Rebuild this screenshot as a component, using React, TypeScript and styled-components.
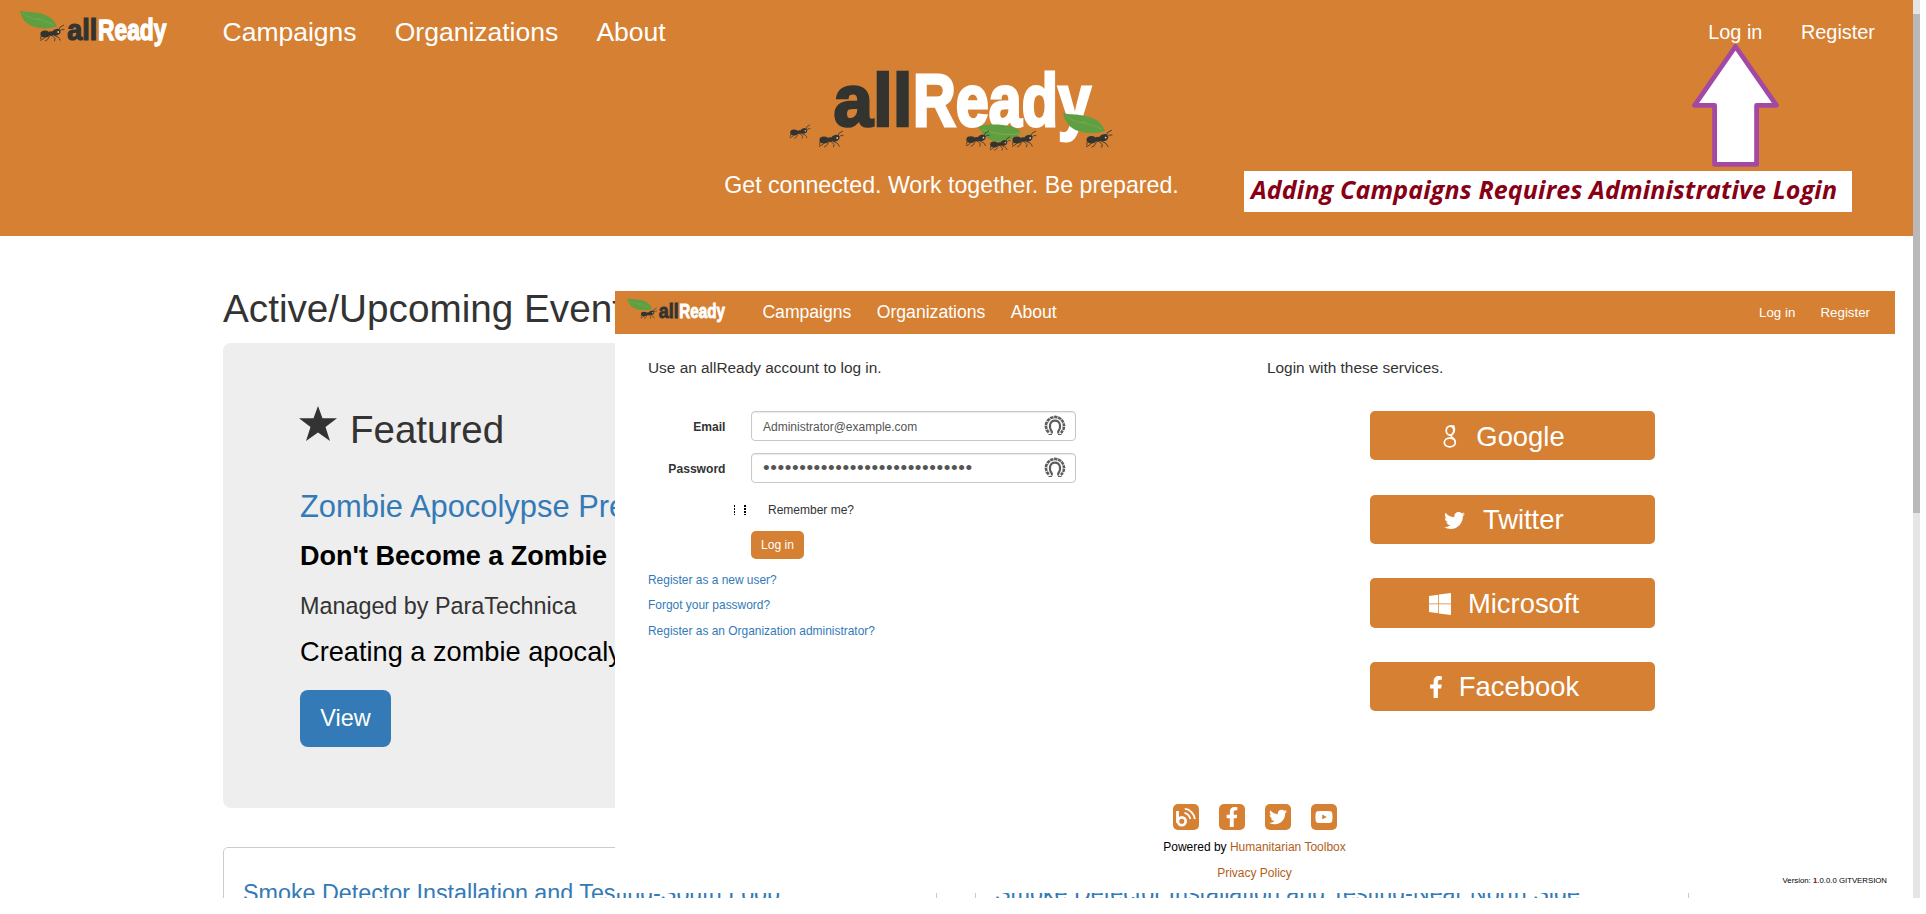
import React from "react";
import styled, { createGlobalStyle } from "styled-components";
import { FaTwitter, FaFacebookF, FaYoutube } from "react-icons/fa";

const ORANGE = "#d58033";
const BLUE = "#337ab7";
const INK = "#333333";
const LEAF = "#5f9f42";
const SANS = '"Liberation Sans", Arial, sans-serif';

const GlobalStyle = createGlobalStyle`
  *, *::before, *::after { box-sizing: border-box; }
  body { margin: 0; background: #fff; color: ${INK}; font-family: ${SANS}; }
  a { text-decoration: none; color: inherit; }
`;

/* ---------- drawings ---------- */

type Place = { x: number; y: number; w: number };

/* An ant walking right, in a 26 x 18 box. */
const Ant = ({ x, y, w }: Place) => (
  <g transform={`translate(${x} ${y}) scale(${w / 26})`} stroke="#333330" strokeWidth="0.8" fill="none">
    <ellipse cx="6" cy="10" rx="4.6" ry="3.5" fill="#333330" stroke="none" />
    <ellipse cx="12.2" cy="9.6" rx="3" ry="2.3" fill="#333330" stroke="none" />
    <ellipse cx="17.4" cy="8.2" rx="4.1" ry="3.2" fill="#333330" stroke="none" transform="rotate(-20 17.4 8.2)" />
    <path d="M8 11.500 4 15 1 16.500M11 11.500 8.600 15.600 6 17M13 11.500 16 14.500 15.400 17.200M14.500 11 19.500 13.400 21.500 16.600" />
    <path d="M2 12 1.600 15M20 6.500 21 3.200 25 1M20.800 7.400 22.600 5.600 25.400 5.600" />
    <circle cx="19.200" cy="8" r="0.900" fill="#c9c9c4" stroke="none" />
  </g>
);

/* A leaf with its tip at the top left, in a 42 x 21 box. */
const Leaf = ({ x, y, w }: Place) => (
  <g transform={`translate(${x} ${y}) scale(${w / 42})`}>
    <path d="M0 0C4 2 9 1 16 2.200 29 3 38 8 42 18 36 20.500 26 21.500 16 18.500 6 15.500 2 9 0 0Z" fill={LEAF} />
    <path d="M3 3.500C13 11.500 26 9 38.500 16.500M17 9.600 24 9" stroke="#74ab57" strokeWidth="0.8" fill="none" />
  </g>
);

const Word = ({ x, y, size, width, fill, weight, children }: {
  x: number; y: number; size: number; width: number; fill: string; weight: number; children: string;
}) => (
  <text x={x} y={y} fontFamily={SANS} fontWeight="700" fontSize={size} fill={fill}
    stroke={fill} strokeWidth={weight} textLength={width} lengthAdjust="spacingAndGlyphs">{children}</text>
);

const LogoSvg = styled.svg`
  display: block;
  flex: none;
  overflow: visible;
`;

const SmallLogo = ({ width }: { width: number }) => (
  <LogoSvg width={width} height={width / 3} viewBox="0 0 150 50">
    <Ant x={21} y={17} w={26} />
    <Leaf x={2} y={3.5} w={37} />
    <Word x={49.2} y={33.2} size={29} width={30} fill="#333330" weight={1.2}>all</Word>
    <Word x={80} y={33.2} size={29} width={68.5} fill="#fff" weight={1.3}>Ready</Word>
  </LogoSvg>
);

const HeroLogo = () => (
  <LogoSvg width="343" height="96" viewBox="780 64 343 96">
    <Word x={833.5} y={126} size={74} width={79} fill="#333330" weight={2.6}>all</Word>
    <Word x={913} y={126} size={74} width={178} fill="#fff" weight={3}>Ready</Word>
    <Leaf x={1063} y={112.7} w={42} />
    <path d="M978 127C984 124 994 124.500 1003 125 1012 126 1018 128 1021 133 1014 139 1005 141.500 996 141.500 987 140 984 135 978 127Z" fill={LEAF} />
    <path d="M982 129.500C992 132 1004 137 1021 133L1032 130" stroke="#8aa846" strokeWidth="1" fill="none" />
    <Ant x={789} y={124} w={22} />
    <Ant x={818} y={130} w={26} />
    <Ant x={965} y={130} w={25} />
    <Ant x={989} y={136} w={22} />
    <Ant x={1011} y={130} w={26} />
    <Ant x={1085} y={129} w={28} />
  </LogoSvg>
);

const Arrow = () => (
  <ArrowSvg width="94" height="128" viewBox="1688 42 94 128">
    <path d="M1735.500 46.500 1776.500 105.400H1756.600V164.400H1714.600V105.400H1694.500Z"
      fill="#fff" stroke="#a349a4" strokeWidth="4.8" strokeLinejoin="round" />
  </ArrowSvg>
);

const Star = () => (
  <svg width="38" height="36" viewBox="0 0 38 36">
    <path fill={INK} d="M19 0 23.500 12.300H38L26.500 21 31 35 19 26.500 7 35 11.500 21 0 12.300H14.500Z" />
  </svg>
);

/* The old Google "g" mark. */
const GoogleG = () => (
  <svg width="14" height="23" viewBox="0 0 14 23" fill="none" stroke="#fff" strokeWidth="1.7">
    <ellipse cx="7" cy="5.600" rx="3.800" ry="4.500" />
    <path d="M7 1.100H11.500M10.500 1.500C12 3 11.600 7 9.800 8.600 7.700 10.500 7.800 11.300 9.200 12.400 11 13.600 12 15 12.200 16.500" />
    <ellipse cx="6.800" cy="17.500" rx="5.500" ry="4.300" />
  </svg>
);

const WindowsMark = () => (
  <svg width="22" height="22" viewBox="0 0 22 22">
    <path fill="#fff" d="M0 3 9.200 1.700V10.500H0ZM9.900 1.500 22 0V10.500H9.900ZM0 11.300H9.200V20.300L0 19ZM9.900 11.300H22V22L9.900 20.400Z" />
  </svg>
);

const BlogMark = () => (
  <svg width="22" height="22" viewBox="0 0 22 22" fill="none" stroke="#fff">
    <path d="M2.500 5V17" strokeWidth="2.800" />
    <circle cx="6.800" cy="15.200" r="3.900" strokeWidth="2.700" />
    <path d="M9.500 6.800A8 8 0 0 1 15.300 13M9.800 2.600A12 12 0 0 1 19.800 13" strokeWidth="1.900" />
  </svg>
);

const PersonBadge = () => (
  <svg width="22" height="22" viewBox="0 0 22 22" fill="none" stroke="#5c5c5c">
    <circle cx="11" cy="11" r="9.100" strokeWidth="2.600" strokeDasharray="44 13.200" transform="rotate(131 11 11)" />
    <circle cx="11" cy="11" r="9.100" strokeWidth="2.600" stroke="#fff" strokeDasharray="0.700 3.400" />
    <path d="M7.800 18.500V16.500C4.500 12.500 5.500 5.600 11 5.600S17.500 12.500 14.200 16.500V18.500" strokeWidth="2.100" />
    <path d="M4.500 19.500H8M14 19.500H17.500" strokeWidth="1.200" />
  </svg>
);

/* ---------- page ---------- */

const Viewport = styled.div`
  position: relative;
  display: flex;
  width: 1920px;
  height: 898px;
  overflow: hidden;
  background: #fff;
`;

const Page = styled.div`
  flex: 1;
  min-width: 0;
`;

const Scrollbar = styled.div`
  width: 7px;
  background: #e5e5e5;
  padding-top: 14px;
  overflow: hidden;
`;

const Thumb = styled.div`
  height: 499px;
  background: #b9b9b9;
`;

const Header = styled.header`
  height: 236px;
  background: ${ORANGE};
  color: #fff;
`;

const NavBar = styled.nav<{ $compact?: boolean }>`
  display: flex;
  align-items: center;
  height: ${(p) => (p.$compact ? 43 : 64)}px;
  padding: ${(p) => (p.$compact ? "0 25px 0 11px" : "0 38px 0 18px")};
  background: ${ORANGE};
  color: #fff;
`;

const NavLinks = styled.div<{ $size: number; $gap: number; $left?: number }>`
  display: flex;
  align-items: center;
  gap: ${(p) => p.$gap}px;
  font-size: ${(p) => p.$size}px;
  margin-left: ${(p) => (p.$left === undefined ? "auto" : `${p.$left}px`)};
  white-space: nowrap;
`;

const Hero = styled.div`
  display: flex;
  flex-direction: column;
  align-items: center;
  padding-right: 10px;
`;

const Tagline = styled.p`
  margin: 9px 0 0;
  font-size: 23.2px;
  line-height: 33px;
`;

const Content = styled.main`
  width: 1466px;
  margin-left: 223px;
  padding-top: 51px;
`;

const SectionTitle = styled.h2`
  margin: 0 0 13px;
  font-size: 38.7px;
  font-weight: 400;
  line-height: 43px;
`;

const Jumbotron = styled.section`
  height: 465px;
  padding: 65px 77px 0;
  background: #eeeeee;
  border-radius: 8px;
`;

const Featured = styled.h2`
  display: flex;
  gap: 13px;
  margin: 0 0 39px -1px;
  font-size: 38.5px;
  font-weight: 400;
  line-height: 43px;
  svg { margin-top: -2px; }
`;

const EventLink = styled.a`
  display: block;
  color: ${BLUE};
  font-size: 30.9px;
  line-height: 34px;
`;

const Paragraph = styled.p<{ $size: number; $top: number; $bold?: boolean; $color?: string }>`
  margin: ${(p) => p.$top}px 0 0;
  font-size: ${(p) => p.$size}px;
  font-weight: ${(p) => (p.$bold ? 700 : 400)};
  line-height: ${(p) => (p.$size > 25 ? 38 : 33)}px;
  color: ${(p) => p.$color ?? "#000"};
`;

const ViewButton = styled.button`
  display: block;
  width: 91px;
  height: 57px;
  margin-top: 19px;
  padding: 0;
  border: 0;
  border-radius: 8px;
  background: ${BLUE};
  color: #fff;
  font: 23.400px ${SANS};
`;

const Cards = styled.div`
  display: flex;
  justify-content: space-between;
  margin-top: 39px;
`;

const Card = styled.article`
  width: 714px;
  height: 120px;
  padding: 29px 19px;
  border: 1px solid #cccccc;
  border-radius: 5px;
  color: ${BLUE};
  font-size: 23.300px;
  line-height: 33px;
  white-space: nowrap;
`;

/* ---------- annotations ---------- */

const ArrowSvg = styled.svg`
  position: absolute;
  left: 1688px;
  top: 42px;
`;

const Note = styled.div`
  position: absolute;
  left: 1244px;
  top: 171px;
  width: 608px;
  height: 41px;
  padding-left: 7px;
  background: #fff;
  color: #880015;
  font: italic 700 25px/37px "Open Sans", "Noto Sans", sans-serif;
  letter-spacing: 0.15px;
  white-space: nowrap;
`;

/* ---------- login window ---------- */

const LoginWindow = styled.section`
  position: absolute;
  left: 615px;
  top: 291px;
  width: 1280px;
  height: 602px;
  background: #fff;
`;

const LoginBody = styled.div`
  display: grid;
  grid-template-columns: 619px 1fr;
  height: 470px;
  padding: 23px 0 0 33px;
`;

const Lead = styled.p`
  margin: 0 0 32px;
  font-size: 15.400px;
  line-height: 22px;
`;

const Field = styled.div`
  display: flex;
  align-items: center;
  gap: 25.500px;
  height: 30px;
  margin-bottom: 12px;
`;

const Label = styled.label`
  width: 77.500px;
  text-align: right;
  font-size: 12.100px;
  line-height: 14px;
  padding-top: 1px;
  font-weight: 700;
`;

const InputBox = styled.div`
  display: flex;
  align-items: center;
  justify-content: space-between;
  width: 325px;
  height: 30px;
  padding: 0 9px 0 11px;
  border: 1px solid #c8c8c8;
  border-radius: 4px;
  box-shadow: inset 0 1px 1px #ececec;
  color: #555555;
  font-size: 12px;
`;

const InputText = styled.span`
  padding-top: 2px;
`;

const Dots = styled.span`
  font-size: 19px;
  line-height: 20px;
  letter-spacing: 0.580px;
`;

const Remember = styled.div`
  display: flex;
  align-items: center;
  height: 20px;
  margin: 5px 0 11px 86px;
  font-size: 12px;
`;

const LoginForm = styled.div`
  display: flex;
  flex-direction: column;
`;

const CheckEdge = styled.i<{ $width: number; $gap: number }>`
  height: 10px;
  margin-right: ${(p) => p.$gap}px;
  width: ${(p) => p.$width}px;
  background: repeating-linear-gradient(#000 0 2px, transparent 2px 3px);
`;

const LoginButton = styled.button`
  display: block;
  width: 53px;
  height: 28px;
  margin-left: 103px;
  padding: 0;
  border: 0;
  border-radius: 5px;
  background: ${ORANGE};
  color: #fff;
  font: 12.100px ${SANS};
`;

const HelpLinks = styled.div`
  display: flex;
  flex-direction: column;
  margin-top: 9px;
  color: ${BLUE};
  font-size: 11.950px;
  line-height: 25.400px;
`;

const Services = styled.div`
  display: flex;
  flex-direction: column;
  gap: 34.200px;
  margin-left: 103px;
`;

const ServiceButton = styled.button<{ $gap: number }>`
  display: flex;
  align-items: center;
  justify-content: center;
  gap: ${(p) => p.$gap}px;
  width: 285px;
  height: 49.400px;
  padding: 2px 17px 0 0;
  border: 0;
  border-radius: 5px;
  background: ${ORANGE};
  color: #fff;
  font: 27.400px ${SANS};
`;

const Footer = styled.footer`
  display: flex;
  flex-direction: column;
  align-items: center;
  padding-right: 1px;
  font-size: 12px;
  line-height: 20px;
  color: #000;
`;

const Socials = styled.div`
  display: flex;
  gap: 20px;
`;

const Social = styled.a`
  display: flex;
  align-items: center;
  justify-content: center;
  width: 26px;
  height: 26px;
  border-radius: 5px;
  background: ${ORANGE};
  color: #fff;
`;

const FooterLine = styled.p`
  margin: 6.500px 0 0;
  a { color: #b0601a; }
`;

const Version = styled.p`
  align-self: flex-end;
  margin: -6px 7px 0 0;
  font-size: 7.800px;
  line-height: 8px;
  b { color: #7a1500; }
`;

const services = [
  { name: "Google", icon: <GoogleG />, gap: 19 },
  { name: "Twitter", icon: <FaTwitter size={21} />, gap: 17.5 },
  { name: "Microsoft", icon: <WindowsMark />, gap: 17 },
  { name: "Facebook", icon: <FaFacebookF size={22} style={{ width: 14 }} />, gap: 16 },
];

const Links = ({ items }: { items: string[] }) => (
  <>{items.map((t) => <a key={t}>{t}</a>)}</>
);

const sections = ["Campaigns", "Organizations", "About"];
const account = ["Log in", "Register"];

const Login = () => (
  <LoginWindow>
    <NavBar $compact>
      <SmallLogo width={100} />
      <NavLinks $size={17.6} $gap={25.4} $left={36.4}><Links items={sections} /></NavLinks>
      <NavLinks $size={13.3} $gap={25.2}><Links items={account} /></NavLinks>
    </NavBar>
    <LoginBody>
      <LoginForm>
        <Lead>Use an allReady account to log in.</Lead>
        <Field>
          <Label>Email</Label>
          <InputBox><InputText>Administrator@example.com</InputText><PersonBadge /></InputBox>
        </Field>
        <Field>
          <Label>Password</Label>
          <InputBox><Dots>{"•".repeat(29)}</Dots><PersonBadge /></InputBox>
        </Field>
        <Remember>
          <CheckEdge $width={1} $gap={9} />
          <CheckEdge $width={2} $gap={22} />
          Remember me?
        </Remember>
        <LoginButton>Log in</LoginButton>
        <HelpLinks>
          <Links items={["Register as a new user?", "Forgot your password?", "Register as an Organization administrator?"]} />
        </HelpLinks>
      </LoginForm>
      <div>
        <Lead>Login with these services.</Lead>
        <Services>
          {services.map((s) => (
            <ServiceButton key={s.name} $gap={s.gap}>{s.icon}<span>{s.name}</span></ServiceButton>
          ))}
        </Services>
      </div>
    </LoginBody>
    <Footer>
      <Socials>
        <Social><BlogMark /></Social>
        <Social><FaFacebookF size={20} /></Social>
        <Social><FaTwitter size={18} /></Social>
        <Social><FaYoutube size={18} /></Social>
      </Socials>
      <FooterLine>Powered by <a>Humanitarian Toolbox</a></FooterLine>
      <FooterLine><a>Privacy Policy</a></FooterLine>
      <Version>Version: <b>1</b>.0.0.0 GITVERSION</Version>
    </Footer>
  </LoginWindow>
);

export default function App() {
  return (
    <Viewport>
      <GlobalStyle />
      <Page>
        <Header>
          <NavBar>
            <SmallLogo width={150} />
            <NavLinks $size={26.5} $gap={38.2} $left={54.5}><Links items={sections} /></NavLinks>
            <NavLinks $size={19.9} $gap={38.5}><Links items={account} /></NavLinks>
          </NavBar>
          <Hero>
            <HeroLogo />
            <Tagline>Get connected. Work together. Be prepared.</Tagline>
          </Hero>
        </Header>
        <Content>
          <SectionTitle>Active/Upcoming Events</SectionTitle>
          <Jumbotron>
            <Featured><Star />Featured</Featured>
            <EventLink>Zombie Apocolypse Preparedness</EventLink>
            <Paragraph $size={27.05} $top={12.5} $bold>Don't Become a Zombie</Paragraph>
            <Paragraph $size={23.35} $top={15.5} $color={INK}>Managed by ParaTechnica</Paragraph>
            <Paragraph $size={27.2} $top={10}>Creating a zombie apocalypse plan</Paragraph>
            <ViewButton>View</ViewButton>
          </Jumbotron>
          <Cards>
            <Card>Smoke Detector Installation and Testing-South Loop</Card>
            <Card>Smoke Detector Installation and Testing-Near North Side</Card>
          </Cards>
        </Content>
      </Page>
      <Scrollbar><Thumb /></Scrollbar>
      <Note>Adding Campaigns Requires Administrative Login</Note>
      <Arrow />
      <Login />
    </Viewport>
  );
}
